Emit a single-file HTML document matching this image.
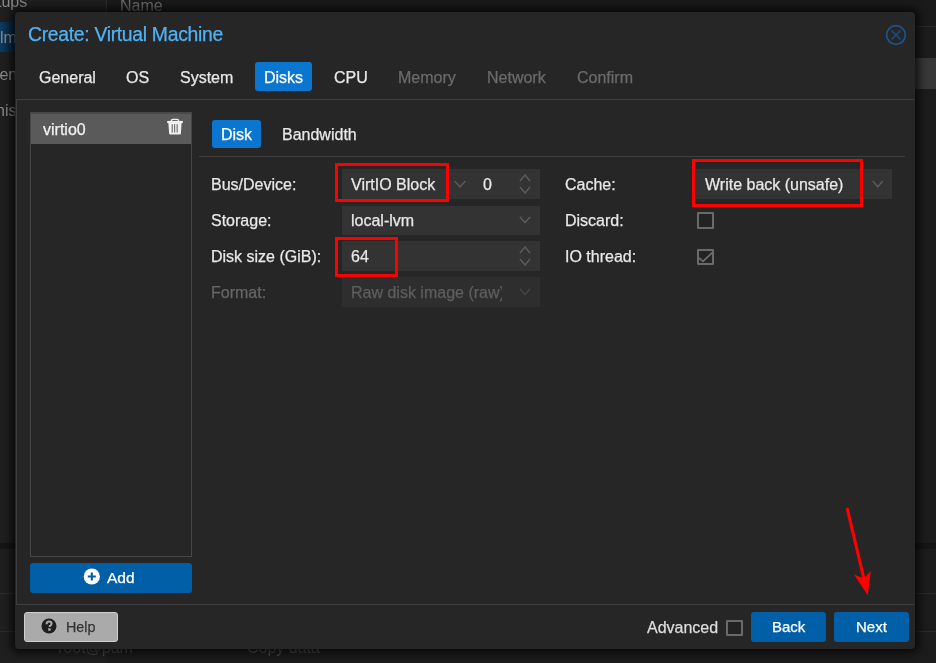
<!DOCTYPE html>
<html><head><meta charset="utf-8">
<style>
*{margin:0;padding:0;box-sizing:border-box}
html,body{width:936px;height:663px;overflow:hidden;will-change:transform;background:#1a1a1a;font-family:"Liberation Sans",sans-serif}
.a{position:absolute}
.t{position:absolute;font-size:16px;line-height:18px;white-space:nowrap;color:#e8e8e8;-webkit-text-stroke:0.25px currentColor}
.bgt{position:absolute;font-size:16px;line-height:18px;white-space:nowrap;color:#777}
</style></head><body>
<!-- background app -->
<div class="a" style="left:0;top:0;width:936px;height:663px;background:#1c1c1c"></div>
<div class="a" style="left:0;top:0;width:106px;height:663px;background:#1f1f1f"></div>
<div class="a" style="left:107px;top:0;width:829px;height:26px;background:#1a1a1a"></div>
<div class="a" style="left:106px;top:0;width:1px;height:26px;background:#2c2c2c"></div>
<div class="a" style="left:107px;top:26px;width:829px;height:1px;background:#2a2a2a"></div>
<div class="a" style="left:107px;top:58px;width:829px;height:31px;background:#383838"></div>
<div class="a" style="left:0;top:543px;width:936px;height:6px;background:#151515"></div>
<div class="a" style="left:0;top:593px;width:936px;height:1px;background:#2b2b2b"></div>
<div class="a" style="left:0;top:631px;width:936px;height:1px;background:#2b2b2b"></div>
<div class="a" style="left:0;top:22px;width:16px;height:30px;background:linear-gradient(90deg,#0d3b60,#06243c)"></div>
<div class="bgt" style="left:-3px;top:-7px;color:#8a8a8a">tups</div>
<div class="bgt" style="left:0px;top:29px;color:#8a8a8a">lm</div>
<div class="bgt" style="left:-5px;top:66px;color:#8a8a8a">fen</div>
<div class="bgt" style="left:-4px;top:102px;color:#8a8a8a">nis</div>
<div class="bgt" style="left:120px;top:-3px;color:#6e6e6e">Name</div>
<div class="bgt" style="left:58px;top:639px;color:#4a4a4a">root@pam</div>
<div class="bgt" style="left:247px;top:639px;color:#4a4a4a">Copy data</div>

<!-- window -->
<div class="a" style="left:15px;top:12px;width:900px;height:637px;background:#262626;border-radius:4px;box-shadow:0 0 9px 4px rgba(0,0,0,0.7)"></div>
<div class="t" style="left:28px;top:24px;font-size:19.4px;line-height:20px;letter-spacing:-0.32px;color:#50b2f4">Create: Virtual Machine</div>
<!-- close icon -->
<svg class="a" style="left:884px;top:23px" width="24" height="24" viewBox="0 0 24 24">
<circle cx="12" cy="12" r="9.3" fill="none" stroke="#1b5589" stroke-width="1.7"/>
<path d="M7.4 7.4 L16.6 16.6 M16.6 7.4 L7.4 16.6" stroke="#184f84" stroke-width="1.4"/>
</svg>

<!-- tabs -->
<div class="t" style="left:39px;top:69px">General</div>
<div class="t" style="left:126px;top:69px">OS</div>
<div class="t" style="left:180px;top:69px">System</div>
<div class="a" style="left:255px;top:62px;width:57px;height:29px;background:#0b76cf;border-radius:3px"></div>
<div class="t" style="left:264px;top:69px;color:#fff">Disks</div>
<div class="t" style="left:334px;top:69px">CPU</div>
<div class="t" style="left:398px;top:69px;color:#6b6b6b">Memory</div>
<div class="t" style="left:487px;top:69px;color:#6b6b6b">Network</div>
<div class="t" style="left:577px;top:69px;color:#6b6b6b">Confirm</div>

<!-- body panel -->
<div class="a" style="left:16px;top:99px;width:898px;height:506px;border-top:1px solid #3f3f3f;border-left:1px solid #3f3f3f;border-bottom:1px solid #3f3f3f"></div>

<!-- left list -->
<div class="a" style="left:30px;top:112px;width:162px;height:445px;border:1px solid #474747;background:#262626"></div>
<div class="a" style="left:31px;top:113px;width:160px;height:31px;background:#5a5a5a;border-top:1px solid #4a4a4a"></div>
<div class="t" style="left:43px;top:121px;color:#f2f2f2">virtio0</div>
<svg class="a" style="left:166px;top:117px" width="18" height="19" viewBox="0 0 18 19">
<path d="M5.4 4 Q5.4 2.4 6.8 2.4 L11.2 2.4 Q12.6 2.4 12.6 4" fill="none" stroke="#f0f0f0" stroke-width="1.4"/>
<rect x="1.2" y="3.9" width="15.6" height="2.2" fill="#f0f0f0"/>
<path d="M2.4 6 L3.1 16.6 Q3.2 17.6 4.3 17.6 L13.7 17.6 Q14.8 17.6 14.9 16.6 L15.6 6 Z" fill="#f0f0f0"/>
<rect x="5.7" y="7.2" width="1.1" height="8.3" fill="#6a6a6a"/>
<rect x="8.1" y="7.2" width="1.1" height="8.3" fill="#6a6a6a"/>
<rect x="10.6" y="7.2" width="1.1" height="8.3" fill="#6a6a6a"/>
</svg>

<!-- add button -->
<div class="a" style="left:30px;top:563px;width:162px;height:30px;background:#005fa6;border-radius:3px"></div>
<svg class="a" style="left:83px;top:568px" width="17" height="17" viewBox="0 0 17 17">
<circle cx="8.8" cy="8.5" r="8.1" fill="#fff"/>
<path d="M8.8 4.5 V12.5 M4.8 8.5 H12.8" stroke="#005fa6" stroke-width="2.1"/>
</svg>
<div class="t" style="left:107px;top:569px;color:#fff;font-size:15.5px">Add</div>

<!-- right: subtabs -->
<div class="a" style="left:212px;top:120px;width:49px;height:28px;background:#0b76cf;border-radius:3px"></div>
<div class="t" style="left:221px;top:126px;color:#fff">Disk</div>
<div class="t" style="left:282px;top:126px">Bandwidth</div>
<div class="a" style="left:199px;top:156px;width:706px;height:1px;background:#3f3f3f"></div>

<!-- form labels -->
<div class="t" style="left:211px;top:176px">Bus/Device:</div>
<div class="t" style="left:211px;top:212px">Storage:</div>
<div class="t" style="left:211px;top:248px">Disk size (GiB):</div>
<div class="t" style="left:211px;top:284px;color:#666">Format:</div>

<div class="t" style="left:565px;top:176px">Cache:</div>
<div class="t" style="left:565px;top:212px">Discard:</div>
<div class="t" style="left:565px;top:248px">IO thread:</div>

<!-- fields -->
<div class="a" style="left:342px;top:169px;width:104px;height:30px;background:#333"></div>
<div class="a" style="left:446px;top:169px;width:25px;height:30px;background:#333"></div>
<div class="a" style="left:471px;top:169px;width:69px;height:30px;background:#333"></div>
<div class="t" style="left:351px;top:176px">VirtIO Block</div>
<div class="t" style="left:483px;top:176px">0</div>
<div class="a" style="left:342px;top:206px;width:198px;height:29px;background:#333"></div>
<div class="t" style="left:351px;top:212px">local-lvm</div>
<div class="a" style="left:342px;top:241px;width:198px;height:30px;background:#333"></div>
<div class="t" style="left:351px;top:248px">64</div>
<div class="a" style="left:342px;top:277px;width:198px;height:30px;background:#2e2e2e"></div>
<div class="a" style="left:351px;top:284px;width:151px;overflow:hidden"><div class="t" style="position:static;color:#5e5e5e">Raw disk image (raw)</div></div>

<div class="a" style="left:696px;top:169px;width:196px;height:30px;background:#333"></div>
<div class="t" style="left:705px;top:176px">Write back (unsafe)</div>

<!-- chevrons / spinners -->
<svg class="a" style="left:0;top:0" width="936" height="663">
<g fill="none" stroke="#5a5a5a" stroke-width="1.5">
<path d="M454.6 181 L460 186.8 L465.4 181"/>
<path d="M519.8 216.8 L525 222.6 L530.2 216.8"/>
<path d="M872.8 181 L877.8 186.8 L882.8 181"/>
<path d="M520 181 L525 175 L530 181 M520 187 L525 193 L530 187"/>
<path d="M520 253 L525 247 L530 253 M520 259 L525 265 L530 259"/>
<path d="M519.8 288.8 L525 294.6 L530.2 288.8" stroke="#444"/>
</g>
</svg>

<!-- checkboxes -->
<div class="a" style="left:697px;top:212px;width:17px;height:17px;border:2px solid #6a6a6a;border-radius:1px;background:#232323"></div>
<div class="a" style="left:697px;top:249px;width:17px;height:16px;border:2px solid #6a6a6a;border-radius:1px;background:#232323"></div>
<svg class="a" style="left:697px;top:249px" width="17" height="16" viewBox="0 0 17 16">
<path d="M2.2 9 L6 12.3 L15.8 3.2" fill="none" stroke="#6e6e6e" stroke-width="1.7"/>
</svg>

<!-- red boxes -->
<div class="a" style="left:335px;top:163px;width:114px;height:39px;border:3px solid #f00"></div>
<div class="a" style="left:335px;top:237px;width:63px;height:40px;border:3px solid #f00"></div>
<div class="a" style="left:692px;top:159px;width:171px;height:48px;border:3px solid #f00"></div>

<!-- footer -->
<div class="a" style="left:24px;top:612px;width:94px;height:30px;background:#aaa;border:1px solid #d0d0d0;border-radius:3px"></div>
<svg class="a" style="left:41px;top:618px" width="16" height="16" viewBox="0 0 16 16">
<circle cx="8" cy="8" r="7.5" fill="#1e1e1e"/>
<path d="M5.6 6.2 Q5.6 3.6 8 3.6 Q10.5 3.6 10.5 5.8 Q10.5 7.2 9 7.9 Q8.6 8.2 8.6 9" fill="none" stroke="#aaa" stroke-width="2"/>
<rect x="7.1" y="10.3" width="2.6" height="2.4" fill="#aaa"/>
</svg>
<div class="t" style="left:65.5px;top:618px;color:#333;font-size:15.4px;transform:scaleX(0.93);transform-origin:0 0">Help</div>

<div class="t" style="left:647px;top:619px;color:#ddd">Advanced</div>
<div class="a" style="left:726px;top:620px;width:17px;height:16px;border:2px solid #6a6a6a;border-radius:1px;background:#232323"></div>
<div class="a" style="left:751px;top:612px;width:75px;height:30px;background:#005fa6;border-radius:3px"></div>
<div class="t" style="left:772px;top:618px;color:#fff;font-size:15px">Back</div>
<div class="a" style="left:834px;top:612px;width:75px;height:30px;background:#005fa6;border-radius:3px"></div>
<div class="t" style="left:856px;top:618px;color:#fff;font-size:15px">Next</div>

<!-- red arrow -->
<svg class="a" style="left:0;top:0" width="936" height="663">
<path d="M847.4 509.2 L864 579" stroke="#f00" stroke-width="3.1" stroke-linecap="round"/>
<path d="M854 574.6 L864.2 578.6 L870.8 570.8 L867.8 595.2 Z" fill="#f00"/>
</svg>
</body></html>
